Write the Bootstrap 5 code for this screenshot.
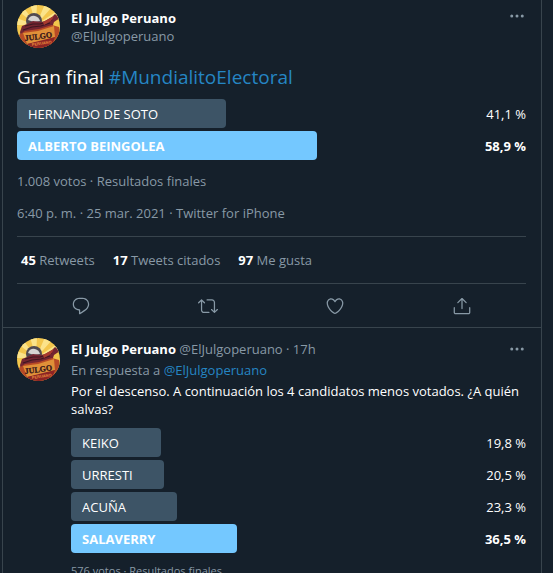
<!DOCTYPE html>
<html lang="es" data-bs-theme="dark">
<head>
<meta charset="utf-8">
<meta name="viewport" content="width=device-width, initial-scale=1">
<title>El Julgo Peruano: Gran final</title>
<link href="https://cdn.jsdelivr.net/npm/bootstrap@5.3.0/dist/css/bootstrap.min.css" rel="stylesheet">
<style>
  :root { --bg: #15202b; --line: #38444d; --muted: #8899a6; --link: #2586c4; }
  body { background: var(--bg); color: #fff; font: 13px/18px "Open Sans", "Noto Sans", sans-serif; }
  a { color: inherit; text-decoration: none; }
  a.accent { color: var(--link); }
  .feed { margin: 0 11px 0 2px; border: solid var(--line); border-width: 0 1px; }
  .tweet { padding: 5px 15px 0 14px; }
  .reply { padding: 10px 15px 12px 14px; border-top: 1px solid var(--line); }
  .dim { color: var(--muted); }
  .avatar { width: 43px; height: 43px; flex: none; }
  .person { gap: 11px; }
  .headline { font-size: 19px; line-height: 26px; margin: 16px 0 9px; font-weight: 400; }
  .poll { display: grid; gap: 3px; }
  .option { height: 29px; position: relative; }
  .fill { position: absolute; inset: 0 auto 0 0; border-radius: 4px; background: #3d5466; }
  .option span { position: relative; }
  .option .label { padding-left: 11px; }
  .winner { font-weight: 700; }
  .winner .fill { background: #74c8ff; }
  .votes { margin: 12px 0 14px; }
  .stats { margin-top: 14px; padding: 14px 4px; gap: 18px; border: solid var(--line); border-width: 1px 0; }
  .actions { height: 43px; }
  .tool { background: none; border: 0; padding: 0; color: var(--muted); line-height: 0; }
  .tool svg { width: 20px; height: 20px; fill: currentColor; }
  .more { height: 18px; margin-top: 2px; }
  .more svg { width: 18px; height: 18px; }
  .body-col { padding-top: 2px; }
  .stack { margin-top: 3px; }
  .reply .poll { margin-top: 10px; }
  .reply .votes { margin: 9px 0 0; font-size: 11px; }
</style>
<script src="https://cdn.jsdelivr.net/npm/bootstrap@5.3.0/dist/js/bootstrap.bundle.min.js"></script>
</head>
<body>
<svg width="0" height="0" class="position-absolute" aria-hidden="true">
  <defs>
    <clipPath id="disc"><circle cx="21.5" cy="21.5" r="21.5"/></clipPath>
    <symbol id="logo" viewBox="0 0 43 43">
      <g clip-path="url(#disc)">
        <rect width="43" height="43" fill="#f3c64c"/>
        <path d="M19 20 0 5 5 0zM19 20 13-1h7zM19 20 28-1l7 3zM19 20 40 6l4 7zM19 20-1 13v7z" fill="#fbe38a"/>
        <circle cx="17" cy="16" r="8" fill="#514a50"/>
        <path d="M11 15q2-5 7-4 4 1 5 5l-6 1z" fill="#d5d3d2"/>
        <path d="M3 27 5 21l5-2 6-3 8 1 4-1 7-4 3-3 5 4-6 4-2 6-10 3-12 3-9 4z" fill="#742531"/>
        <path d="M8 21l8-2 7 0 7-2 5-2M6 25l9-3 9-1 9-3" fill="none" stroke="#3d1720" stroke-width="1.200"/>
        <path d="M26 17l11-6-3 5-7 4z" fill="#a93a2e"/>
        <path d="M2 30 8 26l14-2 13-4 7 2 1 10-6 11H6z" fill="#b84a26"/>
        <path d="M6 28l15-2 16-5 1 11-12 4-16 3z" fill="#e09038"/>
        <path d="M10 39l28-7-4 11H14z" fill="#8c2424"/>
        <text x="8" y="36" transform="rotate(-8 8 36)" font-family="Liberation Serif, serif" font-size="8" font-weight="700" fill="#35151a" stroke="#35151a" stroke-width=".3">JULGO</text>
        <text x="15" y="41" transform="rotate(-8 15 41)" font-family="Liberation Sans, sans-serif" font-size="4" font-weight="700" fill="#e88a3c">PERUANO</text>
      </g>
    </symbol>
    <symbol id="dots" viewBox="0 0 24 24"><circle cx="5" cy="12" r="2"/><circle cx="12" cy="12" r="2"/><circle cx="19" cy="12" r="2"/></symbol>
    <symbol id="comment" viewBox="0 0 24 24"><path d="M14.046 2.242l-4.148-.01h-.002c-4.374 0-7.800 3.427-7.800 7.802 0 4.098 3.186 7.206 7.465 7.370v3.828c0 .108.044.286.120.403.142.225.384.347.632.347.138 0 .277-.038.402-.118.264-.168 6.473-4.140 8.088-5.506 1.902-1.610 3.040-3.970 3.043-6.312v-.017c-.006-4.367-3.430-7.787-7.800-7.788zm3.787 12.972c-1.134.96-4.862 3.405-6.772 4.643V16.670c0-.414-.335-.75-.75-.75h-.396c-3.660 0-6.318-2.476-6.318-5.886 0-3.534 2.768-6.302 6.300-6.302l4.147.010h.002c3.532 0 6.300 2.766 6.302 6.296-.003 1.910-.942 3.844-2.514 5.176z"/></symbol>
    <symbol id="retweet" viewBox="0 0 24 24"><path d="M23.770 15.670c-.292-.293-.767-.293-1.060 0l-2.220 2.220V7.650c0-2.068-1.683-3.750-3.750-3.750h-5.850c-.414 0-.75.336-.75.75s.336.75.75.75h5.850c1.240 0 2.250 1.010 2.250 2.250v10.240l-2.220-2.220c-.293-.293-.768-.293-1.060 0s-.294.768 0 1.060l3.500 3.500c.145.147.337.220.530.220s.383-.072.530-.220l3.500-3.500c.294-.292.294-.767 0-1.060zm-10.660 3.280H7.260c-1.240 0-2.250-1.010-2.250-2.250V6.460l2.220 2.220c.148.147.340.220.532.220s.384-.073.530-.220c.293-.293.293-.768 0-1.060l-3.500-3.500c-.293-.294-.768-.294-1.060 0l-3.500 3.500c-.294.292-.294.767 0 1.060s.767.293 1.060 0l2.220-2.220V16.700c0 2.068 1.683 3.750 3.750 3.750h5.850c.414 0 .75-.336.75-.75s-.337-.75-.75-.75z"/></symbol>
    <symbol id="heart" viewBox="0 0 24 24"><path d="M12 21.638h-.014C9.403 21.590 1.950 14.856 1.950 8.478c0-3.064 2.525-5.754 5.403-5.754 2.290 0 3.830 1.580 4.646 2.730.814-1.148 2.354-2.730 4.645-2.730 2.880 0 5.404 2.690 5.404 5.755 0 6.376-7.454 13.110-10.037 13.157H12zM7.354 4.225c-2.080 0-3.903 1.988-3.903 4.255 0 5.740 7.034 11.596 8.550 11.658 1.518-.062 8.550-5.917 8.550-11.658 0-2.267-1.823-4.255-3.903-4.255-2.528 0-3.940 2.936-3.952 2.965-.230.562-1.156.562-1.387 0-.014-.030-1.425-2.965-3.954-2.965z"/></symbol>
    <symbol id="share" viewBox="0 0 24 24"><path d="M17.530 7.470l-5-5c-.293-.293-.768-.293-1.060 0l-5 5c-.294.293-.294.768 0 1.060s.767.294 1.060 0l3.720-3.720V15c0 .414.336.75.75.75s.75-.336.75-.75V4.810l3.720 3.720c.146.147.338.220.530.220s.384-.072.530-.220c.293-.293.293-.767 0-1.060z"/><path d="M19.708 21.944H4.292C3.028 21.944 2 20.916 2 19.652V14c0-.414.336-.75.75-.75s.75.336.75.75v5.652c0 .437.355.792.792.792h15.416c.437 0 .792-.355.792-.792V14c0-.414.336-.75.75-.75s.75.336.75.75v5.652c0 1.264-1.028 2.292-2.292 2.292z"/></symbol>
  </defs>
</svg>
<div class="vh-100 overflow-hidden">
<main class="feed">
  <article class="tweet">
    <header class="d-flex person align-items-center">
      <svg class="avatar" role="img" aria-label="El Julgo Peruano"><use href="#logo"/></svg>
      <div class="flex-grow-1 d-flex flex-column">
        <a href="#" class="fw-bold">El Julgo Peruano</a>
        <a href="#" class="dim">@ElJulgoperuano</a>
      </div>
      <button type="button" class="tool more align-self-start" aria-label="Más opciones"><svg><use href="#dots"/></svg></button>
    </header>
    <h1 class="headline">Gran final <a href="#" class="accent">#MundialitoElectoral</a></h1>
    <div class="poll">
      <div class="option d-flex align-items-center justify-content-between"><div class="fill" style="width:41.1%"></div><span class="label">HERNANDO DE SOTO</span><span>41,1 %</span></div>
      <div class="option winner d-flex align-items-center justify-content-between"><div class="fill" style="width:58.9%"></div><span class="label">ALBERTO BEINGOLEA</span><span>58,9 %</span></div>
    </div>
    <p class="dim votes">1.008 votos · Resultados finales</p>
    <p class="dim m-0"><a href="#">6:40 p. m. · 25 mar. 2021</a> · <a href="#">Twitter for iPhone</a></p>
    <div class="stats d-flex dim">
      <a href="#"><strong class="text-white">45</strong> Retweets</a>
      <a href="#"><strong class="text-white">17</strong> Tweets citados</a>
      <a href="#"><strong class="text-white">97</strong> Me gusta</a>
    </div>
    <div class="actions d-flex justify-content-around align-items-center">
      <button type="button" class="tool" aria-label="Responder"><svg><use href="#comment"/></svg></button>
      <button type="button" class="tool" aria-label="Retwittear"><svg><use href="#retweet"/></svg></button>
      <button type="button" class="tool" aria-label="Me gusta"><svg><use href="#heart"/></svg></button>
      <button type="button" class="tool" aria-label="Compartir"><svg><use href="#share"/></svg></button>
    </div>
  </article>
  <article class="reply d-flex person">
    <svg class="avatar" role="img" aria-label="El Julgo Peruano"><use href="#logo"/></svg>
    <div class="body-col flex-grow-1">
      <header class="d-flex justify-content-between">
        <div><a href="#" class="fw-bold">El Julgo Peruano</a> <a href="#" class="dim">@ElJulgoperuano</a><span class="dim"> · 17h</span></div>
        <button type="button" class="tool more mt-0" aria-label="Más opciones"><svg><use href="#dots"/></svg></button>
      </header>
      <p class="dim stack mb-0">En respuesta a <a href="#" class="accent">@ElJulgoperuano</a></p>
      <p class="stack mb-0">Por el descenso. A continuación los 4 candidatos menos votados. ¿A quién salvas?</p>
      <div class="poll">
        <div class="option d-flex align-items-center justify-content-between"><div class="fill" style="width:19.8%"></div><span class="label">KEIKO</span><span>19,8 %</span></div>
        <div class="option d-flex align-items-center justify-content-between"><div class="fill" style="width:20.5%"></div><span class="label">URRESTI</span><span>20,5 %</span></div>
        <div class="option d-flex align-items-center justify-content-between"><div class="fill" style="width:23.3%"></div><span class="label">ACUÑA</span><span>23,3 %</span></div>
        <div class="option winner d-flex align-items-center justify-content-between"><div class="fill" style="width:36.5%"></div><span class="label">SALAVERRY</span><span>36,5 %</span></div>
      </div>
      <p class="dim votes">576 votos · Resultados finales</p>
    </div>
  </article>
</main>
</div>
</body>
</html>
